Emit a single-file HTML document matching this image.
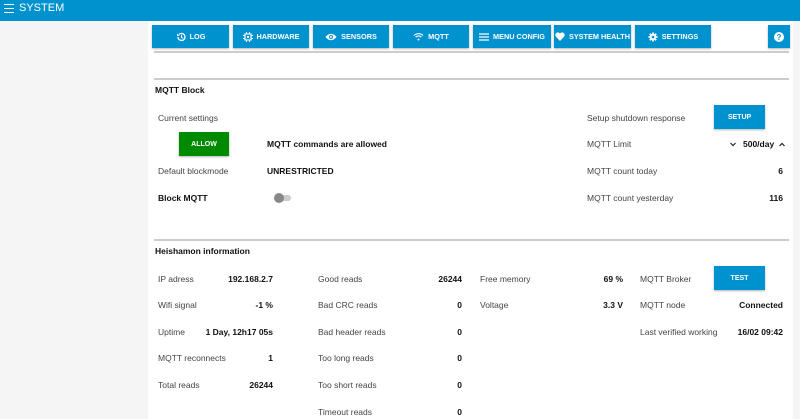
<!DOCTYPE html>
<html><head><meta charset="utf-8"><style>
*{margin:0;padding:0;box-sizing:border-box}
body{width:800px;height:419px;overflow:hidden;background:#f5f5f5;font-family:"Liberation Sans",sans-serif;font-size:8.5px;color:#444;position:relative}
.top{position:absolute;left:0;top:0;width:800px;height:21px;background:#0091cf;color:#fff;font-size:11px;line-height:17px;padding-left:19px}
.top .hb{position:absolute;left:4px;top:4px;width:10px;height:9px;border-top:1.5px solid #fff;border-bottom:1.5px solid #fff}
.top .hb:after{content:"";position:absolute;left:0;top:2.5px;width:10px;height:1.5px;background:#fff}
.panel{position:absolute;left:148px;top:21px;width:645px;height:398px;background:#fff}
.btn{position:absolute;top:25px;height:23px;background:#0091cf;color:#fff;font-weight:bold;font-size:7.3px;display:flex;align-items:center;justify-content:center;gap:4px;box-shadow:0 1px 2px rgba(0,0,0,.3)}
.line{position:absolute;left:154px;width:635px;height:2px;background:#ccc}
.t{position:absolute;white-space:nowrap}
.b{font-weight:bold;color:#111}
.r{text-align:right}
.h{font-weight:bold;color:#111}
.sb{position:absolute;background:#0091cf;color:#fff;font-weight:bold;font-size:7px;display:flex;align-items:center;justify-content:center;box-shadow:0 1px 2px rgba(0,0,0,.3)}
</style></head><body>
<div class="top"><div class="hb"></div>SYSTEM</div>
<div class="panel"></div>
<div class="btn" style="left:152px;width:77px"><svg width="10" height="10" viewBox="0 0 10 10"><path d="M2 5a3.5 3.5 0 1 0 1-2.5" stroke="#fff" stroke-width="1.3" fill="none"/><path d="M1 1.5v2.5h2.5z" fill="#fff"/><path d="M5.5 3v2.3l1.5 1" stroke="#fff" stroke-width="1" fill="none"/></svg>LOG</div>
<div class="btn" style="left:233px;width:76px"><svg width="10" height="10" viewBox="0 0 10 10"><rect x="2" y="2" width="6" height="6" stroke="#fff" stroke-width="1.2" fill="none"/><rect x="4" y="4" width="2" height="2" fill="#fff"/><path d="M3.5 0v2M6.5 0v2M3.5 8v2M6.5 8v2M0 3.5h2M0 6.5h2M8 3.5h2M8 6.5h2" stroke="#fff"/></svg>HARDWARE</div>
<div class="btn" style="left:313px;width:76px"><svg width="12" height="8" viewBox="0 0 12 8"><path d="M0.5 4Q6 -2.5 11.5 4Q6 10.5 0.5 4z" fill="#fff"/><circle cx="6" cy="4" r="2" fill="#0091cf"/><circle cx="6" cy="4" r="1" fill="#fff"/></svg>SENSORS</div>
<div class="btn" style="left:393px;width:76px"><svg width="11" height="9" viewBox="0 0 11 9"><path d="M1 3.5a6.5 6.5 0 0 1 9 0M2.6 5.2a4 4 0 0 1 5.8 0" stroke="#fff" stroke-width="1.2" fill="none"/><circle cx="5.5" cy="7.5" r="1" fill="#fff"/></svg>MQTT</div>
<div class="btn" style="left:473px;width:78px"><svg width="10" height="8" viewBox="0 0 10 8"><path d="M0 1h10M0 4h10M0 7h10" stroke="#fff" stroke-width="1.2"/></svg>MENU CONFIG</div>
<div class="btn" style="left:554px;width:77px"><svg width="10" height="9" viewBox="0 0 10 9"><path d="M5 9L0.8 4.5A2.5 2.5 0 0 1 5 1.5A2.5 2.5 0 0 1 9.2 4.5z" fill="#fff"/></svg>SYSTEM HEALTH</div>
<div class="btn" style="left:635px;width:76px"><svg width="10" height="10" viewBox="0 0 10 10"><circle cx="5" cy="5" r="3.2" fill="#fff"/><path d="M5 0.5v9M0.5 5h9M1.8 1.8l6.4 6.4M8.2 1.8l-6.4 6.4" stroke="#fff" stroke-width="1.8"/><circle cx="5" cy="5" r="1.3" fill="#0091cf"/></svg>SETTINGS</div>
<div class="btn" style="left:768px;width:22px"><svg width="10" height="10" viewBox="0 0 10 10"><circle cx="5" cy="5" r="5" fill="#fff"/><text x="5" y="8" font-size="8" font-weight="bold" fill="#0091cf" text-anchor="middle" font-family="Liberation Sans">?</text></svg></div>
<div class="line" style="top:51px"></div>
<div class="line" style="top:78px"></div>
<div class="line" style="top:239px"></div>

<div class="t h" style="left:155px;top:85px">MQTT Block</div>
<div class="t" style="left:158px;top:113px">Current settings</div>
<div class="sb" style="left:179px;top:132px;width:50px;height:24px;background:#008a00">ALLOW</div>
<div class="t b" style="left:267px;top:139px">MQTT commands are allowed</div>
<div class="t" style="left:158px;top:166px">Default blockmode</div>
<div class="t b" style="left:267px;top:166px">UNRESTRICTED</div>
<div class="t b" style="left:158px;top:193px">Block MQTT</div>
<div style="position:absolute;left:275px;top:195px;width:16px;height:6px;border-radius:3px;background:#ccc"></div>
<div style="position:absolute;left:274px;top:193px;width:10px;height:10px;border-radius:5px;background:#888"></div>
<div class="t" style="left:587px;top:113px">Setup shutdown response</div>
<div class="sb" style="left:714px;top:105px;width:51px;height:24px">SETUP</div>
<div class="t" style="left:587px;top:139px">MQTT Limit</div>
<svg style="position:absolute;left:730px;top:142px" width="6" height="5" viewBox="0 0 6 5"><path d="M0.5 1l2.5 2.5 2.5-2.5" stroke="#222" stroke-width="1.2" fill="none"/></svg>
<div class="t b" style="left:743px;top:139px">500/day</div>
<svg style="position:absolute;left:779px;top:142px" width="6" height="5" viewBox="0 0 6 5"><path d="M0.5 4l2.5-2.5 2.5 2.5" stroke="#222" stroke-width="1.2" fill="none"/></svg>
<div class="t" style="left:587px;top:166px">MQTT count today</div>
<div class="t b r" style="right:17px;top:166px">6</div>
<div class="t" style="left:587px;top:193px">MQTT count yesterday</div>
<div class="t b r" style="right:17px;top:193px">116</div>

<div class="t h" style="left:155px;top:246px">Heishamon information</div>
<div class="t" style="left:158px;top:274px">IP adress</div><div class="t b r" style="right:527px;top:274px">192.168.2.7</div>
<div class="t" style="left:158px;top:300px">Wifi signal</div><div class="t b r" style="right:527px;top:300px">-1 %</div>
<div class="t" style="left:158px;top:327px">Uptime</div><div class="t b r" style="right:527px;top:327px">1 Day, 12h17 05s</div>
<div class="t" style="left:158px;top:353px">MQTT reconnects</div><div class="t b r" style="right:527px;top:353px">1</div>
<div class="t" style="left:158px;top:380px">Total reads</div><div class="t b r" style="right:527px;top:380px">26244</div>
<div class="t" style="left:318px;top:274px">Good reads</div><div class="t b r" style="right:338px;top:274px">26244</div>
<div class="t" style="left:318px;top:300px">Bad CRC reads</div><div class="t b r" style="right:338px;top:300px">0</div>
<div class="t" style="left:318px;top:327px">Bad header reads</div><div class="t b r" style="right:338px;top:327px">0</div>
<div class="t" style="left:318px;top:353px">Too long reads</div><div class="t b r" style="right:338px;top:353px">0</div>
<div class="t" style="left:318px;top:380px">Too short reads</div><div class="t b r" style="right:338px;top:380px">0</div>
<div class="t" style="left:318px;top:407px">Timeout reads</div><div class="t b r" style="right:338px;top:407px">0</div>
<div class="t" style="left:480px;top:274px">Free memory</div><div class="t b r" style="right:177px;top:274px">69 %</div>
<div class="t" style="left:480px;top:300px">Voltage</div><div class="t b r" style="right:177px;top:300px">3.3 V</div>
<div class="t" style="left:640px;top:274px">MQTT Broker</div>
<div class="sb" style="left:714px;top:266px;width:51px;height:24px">TEST</div>
<div class="t" style="left:640px;top:300px">MQTT node</div><div class="t b r" style="right:17px;top:300px">Connected</div>
<div class="t" style="left:640px;top:327px">Last verified working</div><div class="t b r" style="right:17px;top:327px">16/02 09:42</div>
</body></html>
